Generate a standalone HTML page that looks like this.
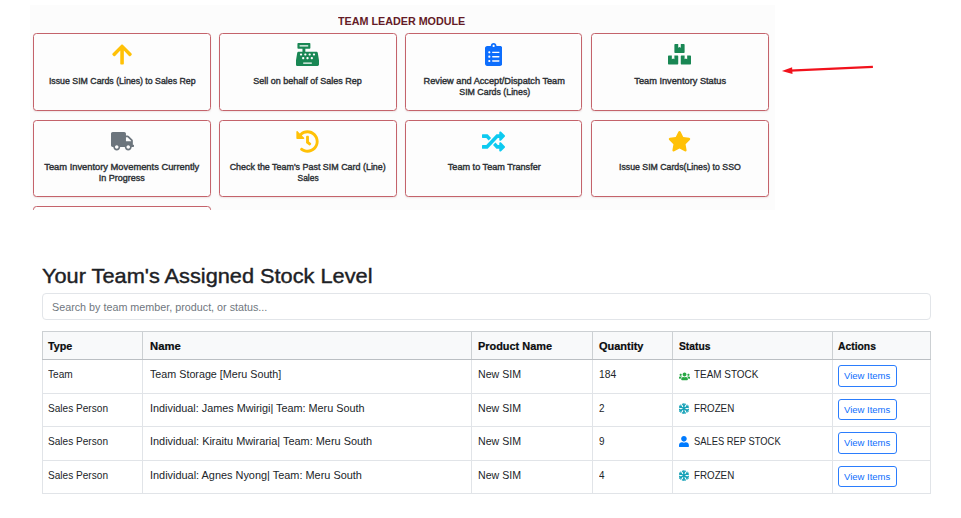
<!DOCTYPE html>
<html lang="en"><head><meta charset="utf-8"><title>Team Inventory Status</title>
<style>
*{box-sizing:border-box;margin:0;padding:0}
html,body{width:961px;height:518px;background:#fff;overflow:hidden}
body{font-family:"Liberation Sans",sans-serif;color:#212529;position:relative}
.sx{display:inline-block;white-space:nowrap;transform-origin:0 50%}
.sx.c{transform-origin:50% 50%}
.panel{position:absolute;left:30px;top:5px;width:745px;height:205px;background:#fcfcfc;overflow:hidden}
.ptitle{position:absolute;left:307.5px;top:9px;font-weight:bold;font-size:10.8px;line-height:14px;color:#641b27;white-space:nowrap}
.card{position:absolute;width:178px;height:78px;border:1px solid #c4636b;border-radius:3.5px;background:#fdfdfd;box-shadow:0 1px 1.5px rgba(120,40,40,.10)}
.card .ic{position:absolute;left:0;right:0;top:9px;height:23px;display:flex;justify-content:center;align-items:center}
.card .lb{position:absolute;left:-20px;right:-20px;top:42px;font-size:8.9px;font-weight:normal;-webkit-text-stroke:.38px #2c3034;color:#2c3034;text-align:center}
.card .ln{height:11px;line-height:11px}
h2{position:absolute;left:41.5px;top:262px;font-size:20.3px;font-weight:normal;-webkit-text-stroke:.4px #1d2125;color:#1d2125;white-space:nowrap;line-height:28px}
.search{position:absolute;left:42px;top:293px;width:889px;height:27px;border:1px solid #e2e5e9;border-radius:4px;font-size:11.2px;color:#70777e;padding-left:8.6px;line-height:26px}
table{position:absolute;left:42px;top:331px;width:888px;border-collapse:collapse;font-size:11px;table-layout:fixed}
th,td{border:1px solid #e1e4e8;text-align:left;padding:0 0 0 5.4px;vertical-align:top;white-space:nowrap;overflow:hidden}
th{height:28px;background:#f8f9fa;font-weight:bold;border-color:#ccd0d3;border-bottom:1px solid #bbbfc3;padding-top:7px;line-height:14px;color:#0a0c0e;-webkit-text-stroke:.22px #0a0c0e;font-size:11.5px}
td{height:33px;padding-top:6.7px;line-height:14px}
tr.t td{height:34px}
th+th,td+td{padding-left:6.6px}
th:nth-child(3),td:nth-child(3),th:nth-child(5),td:nth-child(5){padding-left:5.8px}
th:nth-child(4),td:nth-child(4){padding-left:6.2px}
th:nth-child(6){padding-left:5px}
  .si{display:inline-block;width:15.2px;height:12px;vertical-align:-1.5px}
.si svg{display:block;margin-top:1.7px}
.btn{position:relative;top:-1.9px;display:inline-block;border:1px solid #2b7dfd;color:#0d6efd;border-radius:3px;font-size:9.6px;width:59px;height:22px;line-height:20px;padding-left:5.3px}
</style></head><body>
<div class="panel">
 <div class="ptitle"><span class="sx " style="transform:scaleX(0.996)">TEAM LEADER MODULE</span></div>
<div class="card" style="left:3px;top:28px"><div class="ic" style="left:0px"><svg width="20.12" height="23.00" viewBox="0 0 448 512"><path fill="#ffc107" d="M34.9 289.5l-22.2-22.2c-9.4-9.4-9.4-24.6 0-33.9L207 39c9.4-9.4 24.6-9.4 33.9 0l194.3 194.3c9.4 9.4 9.4 24.6 0 33.9L413 289.4c-9.5 9.5-25 9.300-34.300-.4L264 168.6V456c0 13.300-10.7 24-24 24h-32c-13.3 0-24-10.700-24-24V168.6L69.2 289.100c-9.3 9.800-24.8 10-34.300.4z"/></svg></div><div class="lb" style="top:42.4px"><div class="ln"><span class="sx c" style="transform:scaleX(0.988)">Issue SIM Cards (Lines) to Sales Rep</span></div></div></div>
<div class="card" style="left:189px;top:28px"><div class="ic" style="left:-1.4px"><svg width="23.00" height="23.00" viewBox="0 0 512 512"><path fill="#198754" d="M511.1 378.8l-26.7-160c-2.600-15.400-15.900-26.700-31.600-26.700H208v-64h96c8.8 0 16-7.2 16-16V16c0-8.800-7.200-16-16-16H48c-8.8 0-16 7.200-16 16v96c0 8.8 7.2 16 16 16h96v64H59.100c-15.6 0-29 11.300-31.6 26.7L.8 378.700c-.6 3.500-.9 7-.9 10.5V480c0 17.7 14.3 32 32 32h448c17.7 0 32-14.3 32-32v-90.700c.100-3.500-.2-7-.8-10.500zM280 248c0-8.8 7.200-16 16-16h16c8.8 0 16 7.2 16 16v16c0 8.800-7.2 16-16 16h-16c-8.8 0-16-7.200-16-16v-16zm-32 64h16c8.8 0 16 7.2 16 16v16c0 8.800-7.2 16-16 16h-16c-8.8 0-16-7.200-16-16v-16c0-8.8 7.200-16 16-16zm-32-80c8.8 0 16 7.2 16 16v16c0 8.800-7.2 16-16 16h-16c-8.8 0-16-7.200-16-16v-16c0-8.8 7.200-16 16-16h16zM80 80V48h192v32H80zm40 200h-16c-8.8 0-16-7.200-16-16v-16c0-8.8 7.200-16 16-16h16c8.8 0 16 7.2 16 16v16c0 8.800-7.2 16-16 16zm16 64v-16c0-8.8 7.200-16 16-16h16c8.8 0 16 7.2 16 16v16c0 8.800-7.2 16-16 16h-16c-8.8 0-16-7.200-16-16zm216 112c0 4.400-3.6 8-8 8H168c-4.4 0-8-3.600-8-8v-16c0-4.4 3.600-8 8-8h176c4.4 0 8 3.6 8 8v16zm24-112c0 8.800-7.2 16-16 16h-16c-8.8 0-16-7.200-16-16v-16c0-8.8 7.200-16 16-16h16c8.8 0 16 7.2 16 16v16zm48-80c0 8.800-7.2 16-16 16h-16c-8.8 0-16-7.200-16-16v-16c0-8.8 7.200-16 16-16h16c8.8 0 16 7.2 16 16v16z"/></svg></div><div class="lb" style="top:42.4px"><div class="ln"><span class="sx c" style="transform:scaleX(1.013)">Sell on behalf of Sales Rep</span></div></div></div>
<div class="card" style="left:375px;top:28px;width:177px"><div class="ic" style="left:0px"><svg width="17.25" height="23.00" viewBox="0 0 384 512"><path fill="#0d6efd" d="M336 64h-80c0-35.300-28.700-64-64-64s-64 28.700-64 64H48C21.5 64 0 85.5 0 112v352c0 26.5 21.5 48 48 48h288c26.5 0 48-21.5 48-48V112c0-26.500-21.500-48-48-48zM96 424c-13.3 0-24-10.700-24-24s10.700-24 24-24 24 10.7 24 24-10.7 24-24 24zm0-96c-13.3 0-24-10.700-24-24s10.700-24 24-24 24 10.7 24 24-10.7 24-24 24zm0-96c-13.3 0-24-10.700-24-24s10.700-24 24-24 24 10.7 24 24-10.7 24-24 24zm96-192c13.3 0 24 10.7 24 24s-10.7 24-24 24-24-10.700-24-24 10.700-24 24-24zm128 368c0 4.400-3.6 8-8 8H168c-4.4 0-8-3.600-8-8v-16c0-4.4 3.600-8 8-8h144c4.4 0 8 3.6 8 8v16zm0-96c0 4.400-3.6 8-8 8H168c-4.4 0-8-3.600-8-8v-16c0-4.4 3.600-8 8-8h144c4.4 0 8 3.6 8 8v16zm0-96c0 4.400-3.6 8-8 8H168c-4.4 0-8-3.600-8-8v-16c0-4.4 3.600-8 8-8h144c4.4 0 8 3.6 8 8v16z"/></svg></div><div class="lb" style="top:42.4px;left:-18px;right:-20px"><div class="ln"><span class="sx c" style="transform:scaleX(1.035)">Review and Accept/Dispatch Team</span></div><div class="ln"><span class="sx c" style="transform:scaleX(0.993)">SIM Cards (Lines)</span></div></div></div>
<div class="card" style="left:561px;top:28px"><div class="ic" style="left:-1.4px"><svg width="23.00" height="20.44" viewBox="0 0 576 512"><path fill="#198754" d="M560 288h-80v96l-32-21.300-32 21.300v-96h-80c-8.8 0-16 7.200-16 16v192c0 8.8 7.2 16 16 16h224c8.8 0 16-7.2 16-16V304c0-8.800-7.200-16-16-16zm-384-64h224c8.8 0 16-7.2 16-16V16c0-8.800-7.200-16-16-16h-80v96l-32-21.3L256 96V0h-80c-8.8 0-16 7.200-16 16v192c0 8.8 7.2 16 16 16zm64 64h-80v96l-32-21.3L96 384v-96H16c-8.8 0-16 7.200-16 16v192c0 8.8 7.2 16 16 16h224c8.8 0 16-7.2 16-16V304c0-8.800-7.200-16-16-16z"/></svg></div><div class="lb" style="top:42.4px"><div class="ln"><span class="sx c" style="transform:scaleX(1.039)">Team Inventory Status</span></div></div></div>
<div class="card" style="left:3px;top:115px;height:77px"><div class="ic" style="left:0px"><svg width="23.00" height="18.4" viewBox="0 0 640 512"><path fill="#6c757d" d="M624 352h-16V243.900c0-12.700-5.100-24.900-14.100-33.9L494 110.100c-9-9-21.200-14.100-33.900-14.100H416V48c0-26.500-21.500-48-48-48H48C21.5 0 0 21.5 0 48v320c0 26.5 21.5 48 48 48h16c0 53 43 96 96 96s96-43 96-96h128c0 53 43 96 96 96s96-43 96-96h48c8.8 0 16-7.2 16-16v-32c0-8.800-7.200-16-16-16zM160 464c-26.5 0-48-21.500-48-48s21.500-48 48-48 48 21.5 48 48-21.5 48-48 48zm320 0c-26.5 0-48-21.500-48-48s21.500-48 48-48 48 21.5 48 48-21.5 48-48 48zm80-208H416V144h44.100l99.9 99.9V256z"/></svg></div><div class="lb" style="top:40.9px"><div class="ln"><span class="sx c" style="transform:scaleX(1.051)">Team Inventory Movements Currently</span></div><div class="ln"><span class="sx c" style="transform:scaleX(1.016)">In Progress</span></div></div></div>
<div class="card" style="left:189px;top:115px;height:77px"><div class="ic" style="left:-1.4px"><svg width="23.00" height="23.00" viewBox="0 0 512 512"><path fill="#ffc107" d="M504 255.531c.253 136.640-111.18 248.372-247.82 248.468-59.015.042-113.223-20.530-155.822-54.911-11.077-8.940-11.905-25.541-1.839-35.607l11.267-11.267c8.609-8.609 22.353-9.551 31.891-1.984C173.062 425.135 212.781 440 256 440c101.705 0 184-82.311 184-184 0-101.705-82.311-184-184-184-48.814 0-93.149 18.969-126.068 49.932l50.754 50.754c10.08 10.08 2.941 27.314-11.313 27.314H24c-8.837 0-16-7.163-16-16V38.627c0-14.254 17.234-21.393 27.314-11.314l49.372 49.372C129.209 34.136 189.552 8 256 8c136.81 0 247.747 110.78 248 247.531zm-180.912 78.784l9.823-12.630c8.138-10.463 6.253-25.542-4.210-33.679L288 256.349V152c0-13.255-10.745-24-24-24h-16c-13.255 0-24 10.745-24 24v135.651l65.409 50.874c10.463 8.137 25.541 6.253 33.679-4.210z"/></svg></div><div class="lb" style="top:40.9px"><div class="ln"><span class="sx c" style="transform:scaleX(1.004)">Check the Team's Past SIM Card (Line)</span></div><div class="ln"><span class="sx c" style="transform:scaleX(0.948)">Sales</span></div></div></div>
<div class="card" style="left:375px;top:115px;width:177px;height:77px"><div class="ic" style="left:-0.6px"><svg width="23.00" height="23.00" viewBox="0 0 512 512"><path fill="#0dcaf0" d="M504.971 359.029c9.373 9.373 9.373 24.569 0 33.941l-80 79.984c-15.01 15.010-40.971 4.490-40.971-16.971V416h-58.785a12.004 12.004 0 0 1-8.773-3.812l-70.556-75.596 53.333-57.143L352 336h32v-39.981c0-21.438 25.943-31.998 40.971-16.971l80 79.981zM12 176h84l52.781 56.551 53.333-57.143-70.556-75.596A11.999 11.999 0 0 0 122.785 96H12c-6.627 0-12 5.373-12 12v56c0 6.627 5.373 12 12 12zm372 0v39.984c0 21.46 25.961 31.98 40.971 16.971l80-79.984c9.373-9.373 9.373-24.569 0-33.941l-80-79.981C409.943 24.021 384 34.582 384 56.019V96h-58.785a12.004 12.004 0 0 0-8.773 3.812L96 336H12c-6.627 0-12 5.373-12 12v56c0 6.627 5.373 12 12 12h110.785c3.326 0 6.503-1.381 8.773-3.812L352 176h32z"/></svg></div><div class="lb" style="top:40.9px;left:-18px;right:-20px"><div class="ln"><span class="sx c" style="transform:scaleX(1.026)">Team to Team Transfer</span></div></div></div>
<div class="card" style="left:561px;top:115px;height:77px"><div class="ic" style="left:-1.4px"><svg width="23.00" height="20.44" viewBox="0 0 576 512"><path fill="#ffc107" d="M259.3 17.8L194 150.2 47.9 171.500c-26.2 3.800-36.7 36.100-17.7 54.600l105.7 103-25 145.500c-4.5 26.3 23.2 46 46.4 33.7L288 439.600l130.7 68.700c23.2 12.2 50.900-7.4 46.400-33.700l-25-145.5 105.700-103c19-18.5 8.500-50.800-17.700-54.6L382 150.2 316.7 17.800c-11.700-23.600-45.600-23.900-57.4 0z"/></svg></div><div class="lb" style="top:40.9px"><div class="ln"><span class="sx c" style="transform:scaleX(0.983)">Issue SIM Cards(Lines) to SSO</span></div></div></div>
<div class="card" style="left:3px;top:201px"></div>
</div>
<svg style="position:absolute;left:775px;top:55px" width="110" height="30" viewBox="775 55 110 30"><path d="M872.9 66.9L790 70.6" stroke="#f1121c" stroke-width="2.2" fill="none" stroke-linecap="butt"/><path d="M781.9 71L792.1 67.3L792.5 73.9Z" fill="#f1121c"/></svg>
<h2><span class="sx " style="transform:scaleX(1.072)">Your Team's Assigned Stock Level</span></h2>
<div class="search"><span class="sx " style="transform:scaleX(0.962)">Search by team member, product, or status...</span></div>
<table>
<colgroup><col style="width:100px"><col style="width:329px"><col style="width:121px"><col style="width:80px"><col style="width:160px"><col style="width:98px"></colgroup>
<tr><th><span class="sx " style="transform:scaleX(0.937)">Type</span></th><th><span class="sx " style="transform:scaleX(0.979)">Name</span></th><th><span class="sx " style="transform:scaleX(0.949)">Product Name</span></th><th><span class="sx " style="transform:scaleX(0.953)">Quantity</span></th><th><span class="sx " style="transform:scaleX(0.894)">Status</span></th><th><span class="sx " style="transform:scaleX(0.899)">Actions</span></th></tr>
<tr class="t"><td><span class="sx " style="transform:scaleX(0.919)">Team</span></td><td><span class="sx " style="transform:scaleX(0.976)">Team Storage [Meru South]</span></td><td><span class="sx " style="transform:scaleX(0.963)">New SIM</span></td><td><span class="sx " style="transform:scaleX(0.940)">184</span></td><td><span class="si"><svg width="11.1" height="8.9" viewBox="0 0 640 512" style="margin-top:5px"><path fill="#28a745" d="M96 224c35.3 0 64-28.7 64-64s-28.700-64-64-64-64 28.700-64 64 28.7 64 64 64zm448 0c35.3 0 64-28.7 64-64s-28.700-64-64-64-64 28.700-64 64 28.7 64 64 64zm32 32h-64c-17.6 0-33.5 7.100-45.1 18.6 40.3 22.1 68.9 62 75.1 109.400h66c17.7 0 32-14.3 32-32v-32c0-35.300-28.700-64-64-64zm-256 0c61.9 0 112-50.1 112-112S381.9 32 320 32 208 82.1 208 144s50.1 112 112 112zm76.8 32h-8.300c-20.8 10-43.9 16-68.5 16s-47.600-6-68.500-16h-8.300C179.6 288 128 339.6 128 403.2V432c0 26.5 21.5 48 48 48h288c26.5 0 48-21.5 48-48v-28.800c0-63.600-51.600-115.200-115.200-115.200zm-223.700-13.400C161.5 263.1 145.6 256 128 256H64c-35.3 0-64 28.700-64 64v32c0 17.7 14.3 32 32 32h65.900c6.300-47.4 34.900-87.3 75.200-109.400z"/></svg></span><span class="sx st" style="transform:scaleX(0.901)">TEAM STOCK</span></td><td style="padding-left:5px"><span class="btn"><span class="sx " style="transform:scaleX(0.990)">View Items</span></span></td></tr>
<tr class=""><td><span class="sx " style="transform:scaleX(0.917)">Sales Person</span></td><td><span class="sx " style="transform:scaleX(0.985)">Individual: James Mwirigi| Team: Meru South</span></td><td><span class="sx " style="transform:scaleX(0.963)">New SIM</span></td><td><span class="sx" style="transform:scaleX(.9)">2</span></td><td><span class="si"><svg width="9.8" height="11.3" viewBox="-49 -56.5 98 113"><g stroke="#17a2b8" stroke-width="14" stroke-linecap="round" stroke-linejoin="round" fill="none"><path d="M0-49V49M-42.400-24.5L42.4 24.5M-42.4 24.5L42.400-24.5"/><path stroke-width="11" d="M-15-45L0-27L15-45M-15 45L0 27L15 45M-46.500-9.5L-23.400-13.5L-31.500-35.5M46.5 9.5L23.4 13.5L31.5 35.5M-46.5 9.5L-23.4 13.5L-31.5 35.5M46.500-9.5L23.400-13.5L31.500-35.5"/></g></svg></span><span class="sx st" style="transform:scaleX(0.889)">FROZEN</span></td><td style="padding-left:5px"><span class="btn" style="height:21px;line-height:19.5px"><span class="sx " style="transform:scaleX(0.990)">View Items</span></span></td></tr>
<tr class="t"><td><span class="sx " style="transform:scaleX(0.917)">Sales Person</span></td><td><span class="sx " style="transform:scaleX(0.992)">Individual: Kiraitu Mwiraria| Team: Meru South</span></td><td><span class="sx " style="transform:scaleX(0.963)">New SIM</span></td><td><span class="sx" style="transform:scaleX(.9)">9</span></td><td><span class="si"><svg width="9.9" height="11.3" viewBox="0 0 448 512"><path fill="#007bff" d="M224 256c70.7 0 128-57.3 128-128S294.7 0 224 0 96 57.3 96 128s57.3 128 128 128zm89.6 32h-16.700c-22.2 10.200-46.9 16-72.9 16s-50.600-5.800-72.900-16h-16.700C60.2 288 0 348.2 0 422.4V464c0 26.5 21.5 48 48 48h352c26.5 0 48-21.5 48-48v-41.600c0-74.200-60.200-134.400-134.400-134.400z"/></svg></span><span class="sx st" style="transform:scaleX(0.852)">SALES REP STOCK</span></td><td style="padding-left:5px"><span class="btn"><span class="sx " style="transform:scaleX(0.990)">View Items</span></span></td></tr>
<tr class=""><td><span class="sx " style="transform:scaleX(0.917)">Sales Person</span></td><td><span class="sx " style="transform:scaleX(0.992)">Individual: Agnes Nyong| Team: Meru South</span></td><td><span class="sx " style="transform:scaleX(0.963)">New SIM</span></td><td><span class="sx" style="transform:scaleX(.9)">4</span></td><td><span class="si"><svg width="9.8" height="11.3" viewBox="-49 -56.5 98 113"><g stroke="#17a2b8" stroke-width="14" stroke-linecap="round" stroke-linejoin="round" fill="none"><path d="M0-49V49M-42.400-24.5L42.4 24.5M-42.4 24.5L42.400-24.5"/><path stroke-width="11" d="M-15-45L0-27L15-45M-15 45L0 27L15 45M-46.500-9.5L-23.400-13.5L-31.500-35.5M46.5 9.5L23.4 13.5L31.5 35.5M-46.5 9.5L-23.4 13.5L-31.5 35.5M46.500-9.5L23.400-13.5L31.500-35.5"/></g></svg></span><span class="sx st" style="transform:scaleX(0.889)">FROZEN</span></td><td style="padding-left:5px"><span class="btn" style="height:21px;line-height:19.5px"><span class="sx " style="transform:scaleX(0.990)">View Items</span></span></td></tr>
</table>
</body></html>
